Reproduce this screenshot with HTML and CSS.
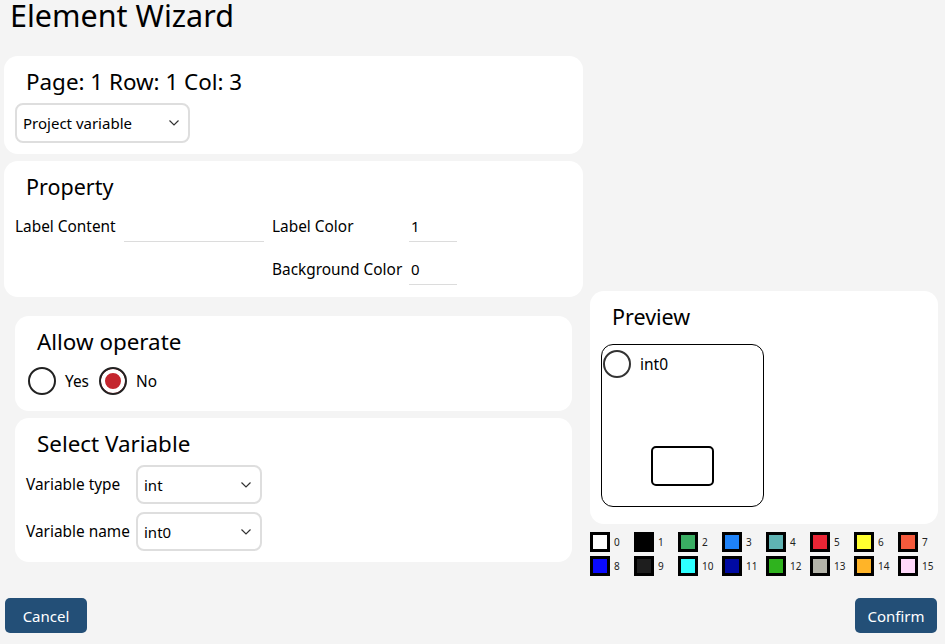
FILE: index.html
```
<!DOCTYPE html>
<html lang="en">
<head>
    <meta charset="UTF-8">
    <meta name="viewport" content="width=device-width, initial-scale=1.0">
    <title>Element Wizard</title>
    <link rel="stylesheet" href="styles.css">
</head>
<body>
    <h1 class="page-title">Element Wizard</h1>
    <div class="wizard">
        <div class="left-col">
            <div class="card">
                <h2 class="card-title big">Page: 1 Row: 1 Col: 3</h2>
                <label class="select-wrap scope-select">
                    <select>
                        <option>Project variable</option>
                    </select>
                    <svg class="chevron" width="10" height="6" viewBox="0 0 10 6"><path d="M0.5 0.5 L5 5 L9.5 0.5" fill="none" stroke="#333" stroke-width="1.2"/></svg>
                </label>
            </div>

            <div class="card prop-card">
                <h2 class="card-title">Property</h2>
                <div class="prop-grid">
                    <label class="field-label" for="label_content">Label Content</label>
                    <input class="line-input wide" type="text" id="label_content">
                    <label class="field-label" for="label_color">Label Color</label>
                    <input class="line-input" type="text" id="label_color" value="1">
                    <span></span>
                    <span></span>
                    <label class="field-label" for="bg_color">Background Color</label>
                    <input class="line-input" type="text" id="bg_color" value="0">
                </div>
            </div>

            <div class="inner-group">
                <div class="card">
                    <h2 class="card-title big">Allow operate</h2>
                    <div class="radio-row">
                        <label class="radio-option"><input type="radio" name="operate"> Yes</label>
                        <label class="radio-option"><input type="radio" name="operate" checked> No</label>
                    </div>
                </div>

                <div class="card">
                    <h2 class="card-title big">Select Variable</h2>
                    <div class="var-row">
                        <span class="field-label">Variable type</span>
                        <label class="select-wrap var-select">
                            <select>
                                <option>int</option>
                            </select>
                            <svg class="chevron" width="10" height="6" viewBox="0 0 10 6"><path d="M0.5 0.5 L5 5 L9.5 0.5" fill="none" stroke="#333" stroke-width="1.2"/></svg>
                        </label>
                    </div>
                    <div class="var-row">
                        <span class="field-label">Variable name</span>
                        <label class="select-wrap var-select">
                            <select>
                                <option>int0</option>
                            </select>
                            <svg class="chevron" width="10" height="6" viewBox="0 0 10 6"><path d="M0.5 0.5 L5 5 L9.5 0.5" fill="none" stroke="#333" stroke-width="1.2"/></svg>
                        </label>
                    </div>
                </div>
            </div>
        </div>

        <div class="right-col">
            <div class="card preview-card">
                <h2 class="card-title">Preview</h2>
                <div class="preview-box">
                    <div class="preview-head">
                        <span class="preview-radio"></span>
                        <span class="preview-label">int0</span>
                    </div>
                    <div class="preview-value"></div>
                </div>
            </div>
            <div class="palette">
                <div class="swatch"><span class="chip" style="background:#ffffff"></span>0</div>
                <div class="swatch"><span class="chip" style="background:#000000"></span>1</div>
                <div class="swatch"><span class="chip" style="background:#3aad63"></span>2</div>
                <div class="swatch"><span class="chip" style="background:#1e82f8"></span>3</div>
                <div class="swatch"><span class="chip" style="background:#5fb3b3"></span>4</div>
                <div class="swatch"><span class="chip" style="background:#e92535"></span>5</div>
                <div class="swatch"><span class="chip" style="background:#ffff30"></span>6</div>
                <div class="swatch"><span class="chip" style="background:#f55a3c"></span>7</div>
                <div class="swatch"><span class="chip" style="background:#0a0aff"></span>8</div>
                <div class="swatch"><span class="chip" style="background:#1e1e1e"></span>9</div>
                <div class="swatch"><span class="chip" style="background:#2effff"></span>10</div>
                <div class="swatch"><span class="chip" style="background:#000aa3"></span>11</div>
                <div class="swatch"><span class="chip" style="background:#2fb31e"></span>12</div>
                <div class="swatch"><span class="chip" style="background:#b4b4a9"></span>13</div>
                <div class="swatch"><span class="chip" style="background:#ffb428"></span>14</div>
                <div class="swatch"><span class="chip" style="background:#ffd9fa"></span>15</div>
            </div>
        </div>
    </div>

    <div class="footer">
        <button class="btn" type="button">Cancel</button>
        <button class="btn" type="button">Confirm</button>
    </div>
</body>
</html>
```
FILE: styles.css
```
body {
    font-family: "Noto Sans", "Open Sans", sans-serif;
    margin: 0;
    background: #f4f4f4;
    color: #000;
}
.page-title {
    margin: 0;
    padding-left: 10px;
    font-size: 30.5px;
    font-weight: normal;
    line-height: 30px;
}
.wizard {
    display: grid;
    grid-template-columns: 579px 348px;
    column-gap: 7px;
    align-items: end;
    margin-top: 26px;
    padding-left: 4px;
}
.left-col {
    display: flex;
    flex-direction: column;
    gap: 7px;
}
.inner-group {
    display: flex;
    flex-direction: column;
    gap: 7px;
    padding: 12px 11px 14px;
}
.card {
    background: #fff;
    border-radius: 14px;
    padding: 11px;
}
.prop-card {
    padding-bottom: 12px;
}
.card-title {
    margin: 0 0 0 11px;
    font-size: 21.5px;
    font-weight: normal;
    line-height: 30px;
}
.card-title.big {
    font-size: 22.4px;
}

/* selects */
.select-wrap {
    position: relative;
    display: block;
}
.select-wrap select {
    appearance: none;
    -webkit-appearance: none;
    width: 100%;
    height: 100%;
    box-sizing: border-box;
    border: 2px solid #dedede;
    border-radius: 8px;
    background: #fff;
    font-family: inherit;
    font-size: 15px;
    color: #000;
    padding: 0 0 0 6px;
    outline: none;
}
.chevron {
    position: absolute;
    right: 11px;
    top: 50%;
    margin-top: -3px;
    pointer-events: none;
}
.scope-select {
    width: 175px;
    height: 40px;
    margin-top: 6px;
}

/* property grid */
.prop-grid {
    display: grid;
    grid-template-columns: 109px 148px 137px 48px;
    grid-auto-rows: 31px;
    row-gap: 12px;
    align-items: center;
    margin-top: 9px;
}
.field-label {
    font-size: 15.4px;
    white-space: nowrap;
}
.prop-grid .field-label {
    margin-top: -1px;
}
.line-input {
    align-self: stretch;
    box-sizing: border-box;
    width: 100%;
    border: none;
    border-bottom: 1px solid #dcdcdc;
    background: transparent;
    font-family: inherit;
    font-size: 15px;
    padding: 0 2px;
    outline: none;
}
.line-input.wide {
    width: 140px;
}

/* radios */
.radio-row {
    display: flex;
    gap: 10px;
    margin: 10px 0 5px 2px;
}
.radio-option {
    display: flex;
    align-items: center;
    gap: 9px;
    font-size: 15.4px;
}
.radio-option input {
    appearance: none;
    -webkit-appearance: none;
    width: 28px;
    height: 28px;
    margin: 0;
    border: 2px solid #222;
    border-radius: 50%;
    background: #fff;
}
.radio-option input:checked {
    background: #c4262e;
    box-shadow: inset 0 0 0 4px #fff;
}

/* variable rows */
.var-row {
    display: flex;
    align-items: center;
    margin-top: 8px;
}
.var-row:first-of-type {
    margin-top: 6px;
}
.var-row .field-label {
    width: 110px;
}
.var-select {
    width: 126px;
    height: 39px;
}

/* preview */
.right-col {
    display: flex;
    flex-direction: column;
}
.preview-card {
    padding-bottom: 17px;
}
.preview-box {
    display: flex;
    flex-direction: column;
    width: 163px;
    height: 163px;
    box-sizing: border-box;
    margin-top: 12px;
    border: 1px solid #000;
    border-radius: 12px;
}
.preview-head {
    display: flex;
    align-items: center;
    gap: 9px;
    margin: 5px 0 0 1px;
}
.preview-radio {
    width: 28px;
    height: 28px;
    box-sizing: border-box;
    border: 2px solid #333;
    border-radius: 50%;
}
.preview-label {
    font-size: 15.5px;
}
.preview-value {
    width: 63px;
    height: 40px;
    box-sizing: border-box;
    margin: auto auto 20px;
    border: 2px solid #000;
    border-radius: 5px;
}
.palette {
    display: grid;
    grid-template-columns: repeat(8, 44px);
    row-gap: 4px;
    margin-top: 8px;
}
.swatch {
    display: flex;
    align-items: center;
    gap: 4px;
    font-size: 10px;
    color: #222;
}
.chip {
    width: 20px;
    height: 20px;
    box-sizing: border-box;
    border: 3px solid #000;
}

/* footer */
.footer {
    display: flex;
    justify-content: space-between;
    margin-top: 22px;
    padding: 0 8px 0 5px;
}
.btn {
    width: 82px;
    height: 35px;
    background: #234f77;
    color: #fff;
    border: none;
    border-radius: 5px;
    font-family: inherit;
    font-size: 15px;
    cursor: pointer;
}
.btn:hover {
    background: #1b3e5e;
}
```
